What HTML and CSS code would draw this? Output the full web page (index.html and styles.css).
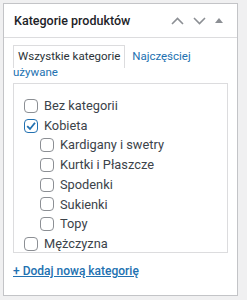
FILE: index.html
```html
<!DOCTYPE html>
<html lang="pl">
<head>
<meta charset="UTF-8">
<meta name="viewport" content="width=device-width, initial-scale=1.0">
<title>Kategorie produktów</title>
<link rel="stylesheet" href="styles.css">
</head>
<body>
<div class="postbox">
    <div class="postbox-header">
        <h2>Kategorie produktów</h2>
        <div class="handle-actions">
            <button class="handle" aria-label="Przesuń w górę">
                <svg width="13" height="8" viewBox="0 0 13 8"><path d="M1 7 L6.5 1.5 L12 7" fill="none" stroke="#8c8f94" stroke-width="1.6"/></svg>
            </button>
            <button class="handle" aria-label="Przesuń w dół">
                <svg width="13" height="8" viewBox="0 0 13 8"><path d="M1 1 L6.5 6.5 L12 1" fill="none" stroke="#8c8f94" stroke-width="1.6"/></svg>
            </button>
            <button class="handle toggle" aria-label="Zwiń">
                <svg width="8" height="5" viewBox="0 0 8 5"><path d="M0 5 L4 0 L8 5 Z" fill="#8c8f94"/></svg>
            </button>
        </div>
    </div>
    <div class="inside">
        <div class="category-tabs">
            <span class="tab active">Wszystkie kategorie</span>
            <a class="tab" href="#">Najczęściej używane</a>
        </div>
        <div class="tabs-panel">
            <ul class="checklist">
                <li><label><span class="cb"></span>Bez kategorii</label></li>
                <li><label><span class="cb checked"><svg width="12" height="12" viewBox="0 0 12 12"><path d="M2.2 6.2 L5 9 L10 2.8" fill="none" stroke="#2271b1" stroke-width="1.8"/></svg></span>Kobieta</label>
                    <ul class="children">
                        <li><label><span class="cb"></span>Kardigany i swetry</label></li>
                        <li><label><span class="cb"></span>Kurtki i Płaszcze</label></li>
                        <li><label><span class="cb"></span>Spodenki</label></li>
                        <li><label><span class="cb"></span>Sukienki</label></li>
                        <li><label><span class="cb"></span>Topy</label></li>
                    </ul>
                </li>
                <li><label><span class="cb"></span>Mężczyzna</label>
                    <ul class="children">
                        <li><label><span class="cb"></span>Bluzy</label></li>
                        <li><label><span class="cb"></span>Koszule</label></li>
                        <li><label><span class="cb"></span>Kurtki</label></li>
                        <li><label><span class="cb"></span>Spodnie</label></li>
                        <li><label><span class="cb"></span>T-shirty</label></li>
                    </ul>
                </li>
            </ul>
        </div>
        <a class="add-new" href="#">+ Dodaj nową kategorię</a>
    </div>
</div>
</body>
</html>
```

FILE: styles.css
```css
body {
    margin: 0;
    padding: 3px;
    background-color: #f0f0f1;
    font-family: Roboto, "Liberation Sans", Arial, sans-serif;
    font-size: 11.5px;
    color: #3c434a;
}
.postbox {
    width: 235px;
    height: 293px;
    box-sizing: border-box;
    background-color: #fff;
    border: 1px solid #c3c4c7;
}
.postbox-header {
    height: 34px;
    box-sizing: border-box;
    border-bottom: 1px solid #dcdcde;
    display: flex;
    align-items: center;
    justify-content: space-between;
    padding: 0 9px 0 10px;
}
.postbox-header h2 {
    margin: 0;
    font-size: 12.5px;
    font-weight: 500;
    color: #1d2327;
}
.handle-actions {
    display: flex;
    align-items: center;
}
.handle {
    border: none;
    background: none;
    padding: 0;
    width: 22px;
    height: 20px;
    display: flex;
    align-items: center;
    justify-content: center;
}
.handle.toggle {
    width: 18px;
}
.inside {
    padding: 7px 9px 0;
}
.category-tabs {
    line-height: 16px;
    padding-top: 3px;
}
.tab.active {
    color: #2c3338;
    border: 1px solid #dcdcde;
    border-bottom: none;
    padding: 3px 4px 5px;
}
a.tab {
    color: #2271b1;
    text-decoration: none;
    margin-left: 4px;
}
.tabs-panel {
    margin-top: 3px;
    height: 170px;
    box-sizing: border-box;
    overflow-y: auto;
    border: 1px solid #dcdcde;
    padding-left: 10px;
    font-size: 12.8px;
}
.tabs-panel::-webkit-scrollbar {
    width: 14px;
}
.tabs-panel::-webkit-scrollbar-track {
    background-color: #fafafa;
    border-left: 1px solid #e8e8e8;
}
.tabs-panel::-webkit-scrollbar-thumb {
    background-color: #c1c1c1;
    border-radius: 7px;
    border: 3px solid transparent;
    border-left-width: 4px;
    background-clip: content-box;
}
.checklist, .children {
    list-style: none;
    margin: 0;
    padding: 0;
}
.checklist {
    margin: 12px 0;
}
.children {
    margin-left: 16px;
}
.checklist li {
    line-height: 19.7px;
}
.checklist label {
    display: flex;
    align-items: center;
}
.cb {
    width: 14px;
    height: 14px;
    box-sizing: border-box;
    border: 1px solid #8c8f94;
    border-radius: 4px;
    margin-right: 6px;
    display: flex;
    align-items: center;
    justify-content: center;
}
.cb.checked {
    border: 1.5px solid #2271b1;
}
.add-new {
    display: inline-block;
    margin-top: 10px;
    line-height: 16px;
    font-size: 12px;
    color: #2271b1;
    font-weight: 500;
}
```
